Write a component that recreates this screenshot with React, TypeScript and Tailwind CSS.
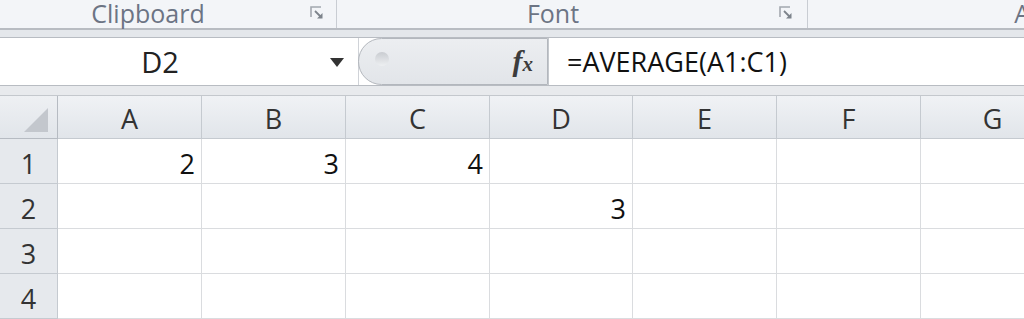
import React from 'react';

const cols = ['A', 'B', 'C', 'D', 'E', 'F', 'G'];

// values shown in the sheet, keyed by row then column
const data: Record<number, Record<string, string>> = {
  1: { A: '2', B: '3', C: '4' },
  2: { D: '3' },
};

function Launcher() {
  return (
    <svg width="16" height="16" viewBox="0 0 16 16" fill="none">
      <path d="M2 12V2h10" stroke="#a3a8af" strokeWidth="1.6" />
      <path d="M6 6l6.5 6.5" stroke="#7d838b" strokeWidth="1.8" />
      <path d="M13.5 8v5.5H8z" fill="#7d838b" />
    </svg>
  );
}

export default function App() {
  return (
    <div
      className="w-[1024px] h-[319px] overflow-hidden bg-white flex flex-col"
      style={{ fontFamily: '"Open Sans", Lato, sans-serif' }}
    >
      {/* ribbon group labels */}
      <div className="h-[28px] flex bg-[#f3f5f8] text-[#6c7484] text-[25px] leading-[26px]">
        <div className="w-[337px] flex items-start relative border-r border-[#c9cdd3]">
          <span className="flex-1 text-center pr-[40px]">Clipboard</span>
          <span className="absolute left-[309px] top-[5px]"><Launcher /></span>
        </div>
        <div className="w-[471px] flex items-start relative border-r border-[#c9cdd3]">
          <span className="flex-1 text-center pr-[38px]">Font</span>
          <span className="absolute left-[441px] top-[5px]"><Launcher /></span>
        </div>
        <div className="flex-1 flex items-start justify-end">
          <span className="-mr-[6px]">A</span>
        </div>
      </div>

      {/* band under ribbon */}
      <div className="h-[10px] bg-[#e4e7eb] border-t-2 border-b border-[#b8bcc2]" />

      {/* formula bar */}
      <div className="h-[49px] flex border-b border-[#b8bcc2] bg-white">
        <div className="w-[359px] flex items-center relative border-r border-[#d0d3d8]">
          <span className="flex-1 text-center text-[29px] leading-none text-[#222] pr-[38px]">D2</span>
          <svg className="absolute left-[330px] top-[20px]" width="14" height="9" viewBox="0 0 14 9">
            <path d="M0 0h14L7 9z" fill="#333" />
          </svg>
        </div>
        <div className="w-[190px] -ml-[1px] flex items-center rounded-l-[28px] border border-[#b3b7bd] bg-gradient-to-b from-[#eceef1] to-[#e2e5e9] relative">
          <div className="absolute left-[16px] top-[13px] w-[14px] h-[14px] rounded-full bg-gradient-to-b from-[#c9ccd1] to-[#eef0f2]" />
          <span
            className="ml-auto mr-[14px] italic font-bold text-[#3c3c3c] text-[30px] leading-none"
            style={{ fontFamily: '"Liberation Serif", serif' }}
          >
            f<span className="text-[21px]">x</span>
          </span>
        </div>
        <div className="flex-1 flex items-center pl-[18px] border-l border-[#c4c8cd] text-[27px] leading-none text-[#111]">
          =AVERAGE(A1:C1)
        </div>
      </div>

      {/* band above grid */}
      <div className="h-[10px] bg-[#e8eaed] border-b border-[#c4c8cd]" />

      {/* grid */}
      <div className="grid grid-cols-[58px_144px_144px_144px_143px_144px_144px_144px] grid-rows-[43px_45px_45px_45px_45px] text-[27px] leading-none text-[#222]">
        <div className="bg-gradient-to-b from-[#eef0f3] to-[#e1e5ea] border-r border-b border-[#b6bbc2] flex items-end justify-end pr-[9px] pb-[6px]">
          <svg width="24" height="24" viewBox="0 0 24 24">
            <path d="M24 0V24H0z" fill="#c3c7cd" />
          </svg>
        </div>
        {cols.map((c) => (
          <div
            key={c}
            className="bg-gradient-to-b from-[#f0f2f5] to-[#e1e5ea] border-r border-b border-[#c5cad0] flex items-center justify-center pt-[2px] text-[#333]"
          >
            {c}
          </div>
        ))}
        {[1, 2, 3, 4].map((r) => (
          <React.Fragment key={r}>
            <div className="bg-[#e6e9ed] border-r border-b border-[#c5cad0] flex items-center justify-center pt-[4px] text-[#333]">
              {r}
            </div>
            {cols.map((c) => (
              <div
                key={c}
                className="border-r border-b border-[#dadcdf] flex items-center justify-end pr-[6px] pt-[4px] text-[#111]"
              >
                {data[r]?.[c] ?? ''}
              </div>
            ))}
          </React.Fragment>
        ))}
      </div>
    </div>
  );
}
